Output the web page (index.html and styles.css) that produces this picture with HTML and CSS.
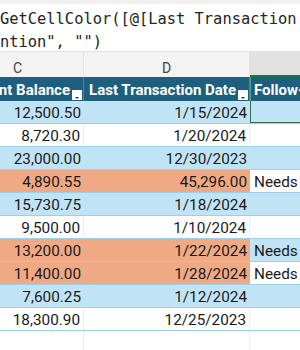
FILE: index.html
```html
<!DOCTYPE html>
<html>
<head>
<meta charset="utf-8">
<link rel="stylesheet" href="styles.css">
</head>
<body>
<div class="app">
  <div class="topstrip"></div>
  <div class="formula">
    <div class="fline">GetCellColor([@[Last Transaction Date]]) = "Orange", "Needs Atte</div>
    <div class="fline">ntion", "")</div>
  </div>
  <div class="sheet">
    <div class="colhead">C</div>
    <div class="colhead">D</div>
    <div class="colhead active">E</div>

    <div class="th num">Account Balance<span class="fbtn"><svg width="10" height="10" viewBox="0 0 10 10"><path d="M3 7h4l-2 2z" fill="#333"/></svg></span></div>
    <div class="th num">Last Transaction Date<span class="fbtn"><svg width="10" height="10" viewBox="0 0 10 10"><path d="M3 7h4l-2 2z" fill="#333"/></svg></span></div>
    <div class="th txt">Follow-up Status</div>

    <div class="td b">12,500.50</div><div class="td b">1/15/2024</div><div class="td b e sel"></div>
    <div class="td w">8,720.30</div><div class="td w">1/20/2024</div><div class="td w e"></div>
    <div class="td b">23,000.00</div><div class="td b">12/30/2023</div><div class="td b e"></div>
    <div class="td o">4,890.55</div><div class="td o">45,296.00</div><div class="td w e">Needs Attention</div>
    <div class="td b">15,730.75</div><div class="td b">1/18/2024</div><div class="td b e"></div>
    <div class="td w">9,500.00</div><div class="td w">1/10/2024</div><div class="td w e"></div>
    <div class="td o">13,200.00</div><div class="td o">1/22/2024</div><div class="td b e">Needs Attention</div>
    <div class="td o">11,400.00</div><div class="td o">1/28/2024</div><div class="td w e">Needs Attention</div>
    <div class="td b">7,600.25</div><div class="td b">1/12/2024</div><div class="td b e"></div>
    <div class="td w">18,300.90</div><div class="td w">12/25/2023</div><div class="td w e"></div>

    <div class="empty"></div><div class="empty"></div><div class="empty e"></div>
  </div>
</div>
</body>
</html>
```
FILE: styles.css
```css
html, body {
  margin: 0;
  padding: 0;
  background: #ffffff;
}
.app {
  width: 300px;
  height: 350px;
  overflow: hidden;
  font-family: Roboto, "Liberation Sans", sans-serif;
}
.topstrip {
  height: 4px;
  background: #f0f0f0;
}
.formula {
  height: 48px;
  background: #ffffff;
  border-bottom: 1px solid #e1e1e1;
  box-sizing: border-box;
  padding-top: 4px;
  overflow: hidden;
}
.fline {
  font-family: "DejaVu Sans Mono", "Liberation Mono", monospace;
  font-size: 15.4px;
  line-height: 23px;
  white-space: pre;
  color: #242424;
  padding-left: 0;
}
.sheet {
  display: grid;
  grid-template-columns: 132px 166px 120px;
  grid-template-rows: 25px 24px repeat(10, 23px) 40px;
  margin-left: -48px;
}
.colhead {
  background: #f3f3f3;
  color: #444;
  font-size: 14px;
  display: flex;
  align-items: center;
  justify-content: center;
  padding-top: 6px;
  box-sizing: border-box;
  border-right: 1px solid #e4e4e4;
}
.colhead.active {
  background: #e1e1e1;
  border-bottom: 2px solid #107c41;
  border-right: none;
}
.th {
  background: #1e5f80;
  color: #ffffff;
  font-weight: 700;
  font-size: 15px;
  display: flex;
  align-items: flex-end;
  line-height: 16px;
  padding-bottom: 3px;
  box-sizing: border-box;
  white-space: nowrap;
  overflow: hidden;
  border-right: 1px solid #4f86a3;
}
.th.num {
  justify-content: flex-end;
  padding-right: 1px;
}
.th.txt {
  padding-left: 3px;
  border-left: 1px solid #5a9a7a;
  border-right: none;
}
.fbtn {
  flex: none;
  width: 10px;
  height: 10px;
  margin-left: 2px;
  margin-bottom: -2px;
  background: #ffffff;
  display: flex;
}
.td {
  font-size: 15.3px;
  line-height: 16px;
  color: #1a1a1a;
  display: flex;
  align-items: flex-end;
  justify-content: flex-end;
  padding-right: 3px;
  padding-bottom: 2px;
  box-sizing: border-box;
  border-bottom: 1px solid #9ccfe8;
  white-space: nowrap;
  overflow: hidden;
}
.td.b { background: #c0e4f5; }
.td.w { background: #ffffff; border-right: 1px solid #ececec; }
.td.o { background: #f0a985; }
.td.e {
  justify-content: flex-start;
  padding-left: 4px;
  padding-right: 0;
  border-right: none;
}
.td.sel {
  box-shadow: inset 1px 0 0 #2e6e4a, inset 0 -1px 0 #2e6e4a;
}
.empty {
  background: #ffffff;
  border-right: 1px solid #ececec;
}
.empty.e { border-right: none; }
```
